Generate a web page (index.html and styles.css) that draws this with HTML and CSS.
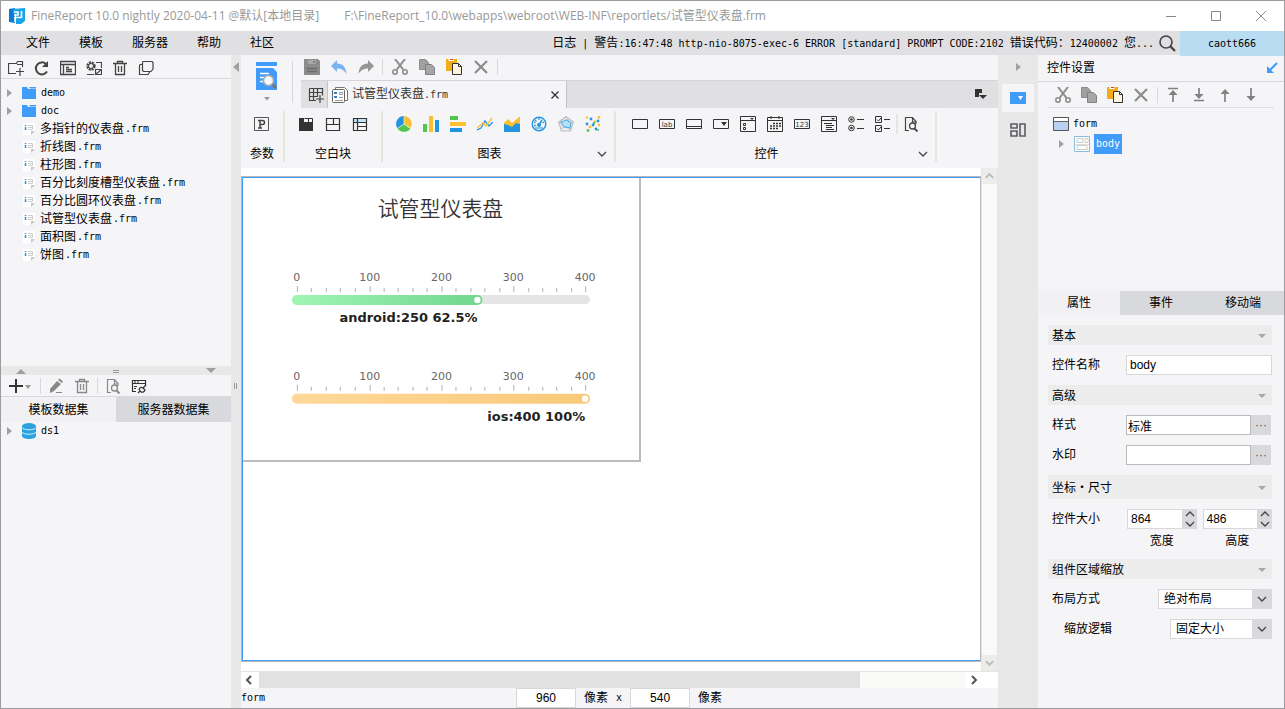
FILE: index.html
```html
<!DOCTYPE html>
<html lang="zh-CN">
<head>
<meta charset="UTF-8" />
<title>FineReport 10.0</title>
<link rel="stylesheet" href="styles.css">
</head>
<body>
<svg class="defs" width="0" height="0">
	<symbol id="cut" viewBox="0 0 16 16"><g fill="none" stroke="#8c8c8c" stroke-width="2"><path d="M3 0L11.5 11M13 0L4.5 11"/><circle cx="3" cy="13" r="2.2" stroke-width="1.6"/><circle cx="13" cy="13" r="2.2" stroke-width="1.6"/></g></symbol>
	<symbol id="copy" viewBox="0 0 16 16"><path d="M.5.5h6l3 3v7h-9z" fill="#a0a0a0" stroke="#8c8c8c"/><path d="M6.500 5.500h6l3 3v7h-9z" fill="#a6a6a6" stroke="#808080"/></symbol>
	<symbol id="paste" viewBox="0 0 16 16"><path d="M0 0h11v12H0z" fill="#f2ac16"/><path d="M2.500 0h5v2h-5z" fill="#fff"/><path d="M4 .5h3" stroke="#c8402a"/><path d="M6.500 4.500h6l3 3v8h-9z" fill="#fff5de" stroke="#333"/><path d="M12.500 4.500v3h3" fill="none" stroke="#333"/></symbol>
	<symbol id="del" viewBox="0 0 16 16"><path d="M2 2l12 12M14 2L2 14" stroke="#8c8c8c" stroke-width="2.200"/></symbol>
	<symbol id="down" viewBox="0 0 16 16"><path d="M4 6l4 4 4-4" fill="none" stroke="#444" stroke-width="1.300"/></symbol>
	<symbol id="up" viewBox="0 0 16 16"><path d="M4 10l4-4 4 4" fill="none" stroke="#444" stroke-width="1.300"/></symbol>
	<symbol id="fold" viewBox="0 0 16 16"><path d="M4 7h8l-4 4z" fill="#a6a6a6"/></symbol>
	<symbol id="right" viewBox="0 0 16 16"><path d="M6 4l5 4-5 4z" fill="#a0a0a0"/></symbol>
	<symbol id="folder" viewBox="0 0 16 16"><path d="M1 2h5l1 2h8v10H1z" fill="#419bf9"/><path d="M8 2h7v1.500H9z" fill="#419bf9"/></symbol>
	<symbol id="frm" viewBox="0 0 16 16"><path d="M2 2h12v8l-4 4H2z" fill="#fff"/><path d="M10 10h4l-4 4z" fill="#c8c8c8"/><path d="M7 4.500h4.500v4H7M7 6.500h4" fill="none" stroke="#ccc"/><path d="M4.500 4v1M4.500 6v3" stroke="#2a8fdd" stroke-width="1.500"/></symbol>
	<symbol id="trash" viewBox="0 0 16 16"><path d="M1 3.500h14M5.500 3V1.500h5V3M3.500 4v10.500h9V4M6.500 6v6M9.500 6v6" fill="none" stroke="currentColor" stroke-width="1.300"/></symbol>
	<symbol id="db" viewBox="0 0 16 16"><path d="M1 3v10c0 4 14 4 14 0V3z" fill="#2ba3df"/><ellipse cx="8" cy="3" rx="7" ry="3" fill="#2ba3df"/><path d="M1 4.500c1 3 13 3 14 0M1 9c1 3 13 3 14 0" fill="none" stroke="#d6effa"/></symbol>
</svg>

<header class="titlebar">
	<svg class="logo" viewBox="0 0 16 16"><path d="M0 1l6-1v15l-6-1z" fill="#0a7ad4"/><path d="M4 1l12-1v13l-4 3H7V6H4z" fill="#18a4e6"/><path d="M5 4h4v3H5M5 9.500h7M6 9v5M12.500 3v7" fill="none" stroke="#fff" stroke-width="1.600"/></svg>
	<span class="app">FineReport 10.0 nightly 2020-04-11 @默认[本地目录]</span>
	<span class="path">F:\FineReport_10.0\webapps\webroot\WEB-INF\reportlets/试管型仪表盘.frm</span>
	<span class="grow"></span>
	<button class="win" aria-label="最小化"><svg viewBox="0 0 12 12"><path d="M1 6.500h10" stroke="#888"/></svg></button>
	<button class="win" aria-label="最大化"><svg viewBox="0 0 12 12"><path d="M1.500 1.500h9v9h-9z" fill="none" stroke="#888"/></svg></button>
	<button class="win" aria-label="关闭"><svg viewBox="0 0 12 12"><path d="M1 1l10 10M11 1L1 11" stroke="#888"/></svg></button>
</header>

<nav class="menubar">
	<a href="#">文件</a><a href="#">模板</a><a href="#">服务器</a><a href="#">帮助</a><a href="#">社区</a>
	<span class="grow"></span>
	<span class="log">日志<tt> | </tt>警告<tt>:16:47:48 http-nio-8075-exec-6 ERROR [standard] PROMPT CODE:2102 </tt>错误代码：<tt>12400002 </tt>您<tt>...</tt></span>
	<button class="find" aria-label="搜索"><svg viewBox="0 0 18 18"><circle cx="8" cy="8" r="6" fill="none" stroke="#444" stroke-width="1.600"/><path d="M12.500 12.500L17 17" stroke="#444" stroke-width="2.400"/></svg></button>
	<a class="user" href="#"><tt>caott666</tt></a>
</nav>

<main>
	<aside class="left">
		<div class="bar files">
			<button aria-label="新建文件夹"><svg viewBox="0 0 16 16"><path d="M8 13.500H.5v-10h8l1-2h5V7M9 4.500h5M8 11.500h8M12 8v8" fill="none" stroke="#444" stroke-width="1.200"/></svg></button>
			<button aria-label="刷新"><svg viewBox="0 0 16 16"><path d="M13 11.500A6 6 0 1 1 12 4" fill="none" stroke="#444" stroke-width="2"/><path d="M14 1v6H8z" fill="#444"/></svg></button>
			<button aria-label="打开位置"><svg viewBox="0 0 16 16"><path d="M.5 1.500h15v13H.5zM1 4.500h15M3.500 5v9M6 7.500h3M6 9.500h6M6 11.500h6" fill="none" stroke="#444" stroke-width="1.300"/></svg></button>
			<button aria-label="重命名"><svg viewBox="0 0 16 16"><circle cx="5" cy="6" r="3.500" fill="none" stroke="#444" stroke-width="2.400" stroke-dasharray="2 .8"/><circle cx="5" cy="6" r="2.500" fill="none" stroke="#444"/><path d="M10 2.500h5.500V8M1 14.500h7M9.500 9.500h6v5h-6zM10 14l5-4" fill="none" stroke="#444" stroke-width="1.200"/></svg></button>
			<button aria-label="删除"><svg><use href="#trash"/></svg></button>
			<button aria-label="复制"><svg viewBox="0 0 16 16"><path d="M5 1.500h9l1 1V9l-2 2.500H5.500l-1-1V2.500z" fill="none" stroke="#444" stroke-width="1.200"/><path d="M4 4.500H2L1.500 6v8.500H10l2-3" fill="none" stroke="#444" stroke-width="1.200"/></svg></button>
		</div>
		<ul class="tree">
			<li><svg><use href="#right"/></svg><svg><use href="#folder"/></svg><tt>demo</tt></li>
			<li><svg><use href="#right"/></svg><svg><use href="#folder"/></svg><tt>doc</tt></li>
			<li class="leaf"><svg><use href="#frm"/></svg>多指针的仪表盘<tt>.frm</tt></li>
			<li class="leaf"><svg><use href="#frm"/></svg>折线图<tt>.frm</tt></li>
			<li class="leaf"><svg><use href="#frm"/></svg>柱形图<tt>.frm</tt></li>
			<li class="leaf"><svg><use href="#frm"/></svg>百分比刻度槽型仪表盘<tt>.frm</tt></li>
			<li class="leaf"><svg><use href="#frm"/></svg>百分比圆环仪表盘<tt>.frm</tt></li>
			<li class="leaf"><svg><use href="#frm"/></svg>试管型仪表盘<tt>.frm</tt></li>
			<li class="leaf"><svg><use href="#frm"/></svg>面积图<tt>.frm</tt></li>
			<li class="leaf"><svg><use href="#frm"/></svg>饼图<tt>.frm</tt></li>
		</ul>
		<div class="splitter">
			<svg viewBox="0 0 10 8"><path d="M0 7l5-5 5 5z" fill="#a0a0a0"/></svg>
			<svg viewBox="0 0 10 8"><path d="M2 3.500h6M2 5.500h6" stroke="#999"/></svg>
			<svg viewBox="0 0 10 8"><path d="M0 1h10L5 6z" fill="#a0a0a0"/></svg>
		</div>
		<div class="bar data">
			<button class="add" aria-label="新增"><svg viewBox="0 0 24 16"><path d="M1 8h14M8 1v14" stroke="#333" stroke-width="2"/><path d="M17 7h6l-3 4z" fill="#999"/></svg></button>
			<i class="sep"></i>
			<button aria-label="编辑"><svg viewBox="0 0 16 16"><path d="M2 11l7-8 4 3-7 7-4 2z" fill="#888"/><path d="M10 2l1.500-1.500L15 3.500 14 5z" fill="#888"/><path d="M8 14.500h6" stroke="#888"/></svg></button>
			<button class="dim" aria-label="删除"><svg><use href="#trash"/></svg></button>
			<i class="sep"></i>
			<button aria-label="预览"><svg viewBox="0 0 16 16"><path d="M6 14.500H2.500v-13h7l3.500 4V8M9.500 2v4H13" fill="none" stroke="#888" stroke-width="1.200"/><circle cx="9.500" cy="10" r="3" fill="none" stroke="#888" stroke-width="1.300"/><path d="M11.500 12.500l3 3" stroke="#888" stroke-width="2"/></svg></button>
			<button aria-label="连接"><svg viewBox="0 0 16 16"><path d="M5 13.500H1.500v-11h13V7M1 5.500h14M3 8.500h3M3 10.500h2M3 4h2M6 4h2" fill="none" stroke="#333" stroke-width="1.200"/><path d="M7 15l2-2M12 10l3-3" stroke="#333" stroke-width="1.300"/><path d="M8 11a3 3 0 0 1 4-1l2 2a3 3 0 0 1-4 2z" fill="none" stroke="#333" stroke-width="1.200"/></svg></button>
		</div>
		<div class="tabs">
			<button class="on">模板数据集</button><button>服务器数据集</button>
		</div>
		<ul class="tree ds">
			<li><svg><use href="#right"/></svg><svg><use href="#db"/></svg><tt>ds1</tt></li>
		</ul>
	</aside>

	<div class="handle">
		<svg viewBox="0 0 10 24"><path d="M8 7v10L2 12z" fill="#a0a0a0"/></svg>
		<svg viewBox="0 0 10 8"><path d="M3.500 1v6M5.500 1v6" stroke="#999"/></svg>
	</div>

	<section class="center">
		<div class="top">
			<button class="preview" aria-label="表单预览"><svg viewBox="0 0 22 40"><path d="M0 0h21v4H0zM0 6h17l4 4v18H0z" fill="#419bf9"/><path d="M4 11.500h9M4 15.500h5M4 19.500h5" stroke="#fff" stroke-width="1.600"/><path d="M15 21l5 5" stroke="#777" stroke-width="3"/><circle cx="12.500" cy="18.500" r="5" fill="#f3f9ff" stroke="#aaa" stroke-width="1.500"/><path d="M8 35h6l-3 3.500z" fill="#999"/></svg></button>
			<i class="sep tall"></i>
			<div class="toprows">
				<div class="bar edit">
					<button aria-label="保存"><svg viewBox="0 0 16 16"><path d="M0 0h14l2 2v14H0z" fill="#8c8c8c"/><path d="M4 1h8v4H4z" fill="#a8a8a8"/><path d="M10 2v2M3 9.500h10M3 12.500h10" stroke="#6c6c6c" stroke-width="1.300"/></svg></button>
					<button aria-label="撤销"><svg viewBox="0 0 16 16"><path d="M6 1v3.500c6 0 9 4 9.500 10.500C13 11 10 9.500 6 9.500V13L0 7z" fill="#7db3ef"/></svg></button>
					<button aria-label="重做"><svg viewBox="0 0 16 16"><path d="M10 1v3.500C4 4.500 1 8.500.5 15 3 11 6 9.500 10 9.500V13l6-6z" fill="#969696"/></svg></button>
					<i class="sep"></i>
					<button aria-label="剪切"><svg><use href="#cut"/></svg></button>
					<button aria-label="复制"><svg><use href="#copy"/></svg></button>
					<button aria-label="粘贴"><svg><use href="#paste"/></svg></button>
					<button aria-label="删除"><svg><use href="#del"/></svg></button>
					<i class="sep"></i>
				</div>
				<div class="filetabs">
					<button class="new" aria-label="新建"><svg viewBox="0 0 16 16"><path d="M1.500 1.500h13v7M8 13.500H1.500v-12M1 5.500h14M1 9.500h8M5.500 2v11M9.500 2v8M8 12h8M12 8v8" fill="none" stroke="#444" stroke-width="1.200"/></svg></button>
					<div class="filetab">
						<svg viewBox="0 0 16 16"><path d="M3.500 3V.5h9l3 3v10H13" fill="#fff" stroke="#777"/><rect x=".5" y="2.500" width="12" height="13" rx="1" fill="#fff" stroke="#666"/><path d="M2 5h3v2H2zM2 9h3v2H2z" fill="#2a7fd0"/><path d="M7.500 5.500h3v2h-3zM7 10.500h4M3 13.500h8" fill="none" stroke="#999"/></svg>
						<span>试管型仪表盘<tt>.frm</tt></span>
						<button aria-label="关闭"><svg viewBox="0 0 10 10"><path d="M1.500 1.500l7 7M8.500 1.500l-7 7" stroke="#333" stroke-width="1.300"/></svg></button>
					</div>
					<span class="grow"></span>
					<button class="list" aria-label="标签列表"><svg viewBox="0 0 12 12"><path d="M0 0h7v4H4v4H0z" fill="#333"/><path d="M4 6h8l-4 4z" fill="#333"/></svg></button>
				</div>
			</div>
		</div>
		<div class="ribbon">
			<div class="group g1">
				<div class="icons"><svg viewBox="0 0 16 16"><path d="M.5 1.500h14v13H.5z" fill="none" stroke="#555"/><path d="M4 4.500h4.500a2 2 0 0 1 0 4H6M6 4v8M4 12h4" fill="none" stroke="#444" stroke-width="1.500"/></svg></div>
				<p>参数</p>
			</div>
			<div class="group g2">
				<div class="icons">
					<svg viewBox="0 0 16 16"><path d="M1 2h5v4h9v9H1z" fill="#333"/><path d="M6.500 2.500h8v4M10.500 2v4" fill="none" stroke="#333"/></svg>
					<svg viewBox="0 0 16 16"><path d="M1.500 2.500h13v12h-13zM1 8.500h14M8.500 2v6" fill="none" stroke="#333" stroke-width="1.200"/></svg>
					<svg viewBox="0 0 16 16"><path d="M1.500 2.500h13v4h-13z" fill="#bfe3f8"/><path d="M1.500 2.500h13v12h-13zM1 6.500h14M5.500 2v12M5 10.500h10" fill="none" stroke="#333" stroke-width="1.200"/></svg>
				</div>
				<p>空白块</p>
			</div>
			<div class="group g3">
				<div class="icons">
					<svg viewBox="0 0 16 16"><path d="M8 8V0a8 8 0 0 0-6.500 12.500z" fill="#2394e0"/><path d="M8 8V0a8 8 0 0 1 6.500 12z" fill="#fbc02f"/><path d="M8 8l6.500 4.500a8 8 0 0 1-13 0z" fill="#50c651"/><path d="M8 0v8l6.500 4.500M8 8l-6.500 4.500" fill="none" stroke="#fff" stroke-width=".6"/></svg>
					<svg viewBox="0 0 16 16"><path d="M0 8h4v8H0z" fill="#50c651"/><path d="M6 0h4v16H6z" fill="#fbc02f"/><path d="M12 4h4v12h-4z" fill="#2394e0"/></svg>
					<svg viewBox="0 0 16 16"><path d="M0 0h8v4H0z" fill="#50c651"/><path d="M0 6h16v4H0z" fill="#fbc02f"/><path d="M0 12h12v4H0z" fill="#2394e0"/></svg>
					<svg viewBox="0 0 16 16"><path d="M0 14l4-2 4-7 4 5 4-4" fill="none" stroke="#2394e0" stroke-width="1.300"/><path d="M0 12l6-5 3 3 6-8" fill="none" stroke="#fbc02f" stroke-width="1.300"/></svg>
					<svg viewBox="0 0 16 16"><path d="M0 7l4-4 4 4 7-6h1v15H0z" fill="#fbc02f"/><path d="M0 8l4 1 4 2 4-4 4 1v8H0z" fill="#2394e0"/></svg>
					<svg viewBox="0 0 16 16"><circle cx="8" cy="8" r="6.800" fill="none" stroke="#2394e0" stroke-width="1.400"/><path d="M8 2v2M3 6l1.500 1M13 6l-1.500 1M4 12h8M3 10l2-1M4 4l1.500 1.500" stroke="#2394e0" stroke-width="1.200"/><circle cx="8" cy="9" r="2" fill="#2394e0"/><path d="M8 9l3-5" stroke="#2394e0" stroke-width="1.500"/></svg>
					<svg viewBox="0 0 16 16"><path d="M8 .8L15.300 6l-2.800 9h-9L.7 6z" fill="#eee" stroke="#bbb" stroke-width="1.200"/><path d="M8 3v3L4 13M1 6l7 4 7-4M8 8l4 6" fill="none" stroke="#ccc"/><path d="M3 6l6-2 4 3-1 5-6-1z" fill="#b9e1f8" stroke="#57b5ea" stroke-width="1.300"/></svg>
					<svg viewBox="0 0 16 16"><g fill="#2394e0"><circle cx="6" cy="3" r="1.400"/><circle cx="13" cy="5" r="1.400"/><circle cx="2" cy="8" r="1.400"/><circle cx="8" cy="9" r="1.400"/><circle cx="11" cy="13" r="1.400"/></g><g fill="#fbc02f"><circle cx="2" cy="1.500" r="1.200"/><circle cx="14" cy="1.500" r="1.400"/><circle cx="5" cy="11" r="1.400"/><circle cx="10" cy="5.500" r="1.200"/><circle cx="14" cy="9" r="1.200"/></g><g fill="#50c651"><circle cx="9" cy="7" r="1.200"/><circle cx="3" cy="14.500" r="1.400"/><circle cx="13" cy="14" r="1"/></g></svg>
				</div>
				<p>图表<svg><use href="#down"/></svg></p>
			</div>
			<div class="group g4">
				<div class="icons">
					<svg viewBox="0 0 16 16"><path d="M.5 3.500h15v9H.5z" fill="none" stroke="#333"/></svg>
					<svg viewBox="0 0 16 16"><path d="M.5 3.500h15v9H.5z" fill="none" stroke="#333"/><text x="8" y="11">lab</text></svg>
					<svg viewBox="0 0 16 16"><path d="M.5 3.500h15v9H.5zM1 10.500h14" fill="none" stroke="#333"/></svg>
					<svg viewBox="0 0 16 16"><path d="M.5 3.500h15v9H.5z" fill="none" stroke="#333"/><path d="M8 6h6l-3 4z" fill="#333"/></svg>
					<svg viewBox="0 0 16 16"><path d="M.5.5h15v15H.5zM.5 4.500h15M3.500 7.500h2v2h-2zM3.500 11.500h2v2h-2z" fill="none" stroke="#333"/><path d="M10 2h4l-2 2z" fill="#333"/></svg>
					<svg viewBox="0 0 16 16"><path d="M.5 1.500h15v14H.5zM1 4.500h14M4 0v3M12 0v3" fill="none" stroke="#333"/><path d="M6 7.500h8M3 10h11M3 12.500h8" stroke="#333" stroke-width="1.500" stroke-dasharray="2 1"/></svg>
					<svg viewBox="0 0 16 16"><path d="M.5 3.500h15v9H.5z" fill="none" stroke="#333"/><text x="8" y="11">123</text></svg>
					<svg viewBox="0 0 16 16"><path d="M.5.5h15v15H.5zM.5 4.500h15M3 7.500h8M5 9.500h8M5 11.500h6M5 13.500h8" fill="none" stroke="#333"/><path d="M10 2h4l-2 2z" fill="#333"/></svg>
					<svg viewBox="0 0 16 16"><g fill="none" stroke="#333"><circle cx="3.500" cy="3.500" r="2.800"/><circle cx="3.500" cy="12" r="2.800"/><path d="M9 3.500h7M9 12.500h7"/></g><circle cx="3.500" cy="3.500" r="1.300" fill="#333"/><circle cx="3.500" cy="12" r="1.300" fill="#333"/></svg>
					<svg viewBox="0 0 16 16"><path d="M.5.5h6v6h-6zM.5 9.500h6v6h-6zM9 3.500h6M9 12.500h6M2 3.500l1.500 1.500L6 2M2 12.500L3.500 14 6 11" fill="none" stroke="#333"/></svg>
					<i class="sep"></i>
					<svg viewBox="0 0 16 16"><path d="M6 14.500H2.500v-13h7l3.500 4V8M9.500 2v4H13" fill="none" stroke="#444" stroke-width="1.200"/><circle cx="9.500" cy="10" r="3" fill="none" stroke="#444" stroke-width="1.300"/><path d="M11.500 12.500l3 3" stroke="#444" stroke-width="1.800"/></svg>
				</div>
				<p>控件<svg><use href="#down"/></svg></p>
			</div>
		</div>

		<div class="work">
			<div class="canvas">
				<div class="sheet">
					<div class="form">
						<svg class="chart" viewBox="0 0 397 282">
							<defs>
								<linearGradient id="green"><stop offset="0" stop-color="#a0f5b5"/><stop offset="1" stop-color="#70d68e"/></linearGradient>
								<linearGradient id="orange"><stop offset="0" stop-color="#ffd899"/><stop offset="1" stop-color="#f8c979"/></linearGradient>
								<g id="scale">
									<path d="M54.500 108v6M127.500 108v6M199.500 108v6M271.500 108v6M343.500 108v6" stroke="#b0b0b0"/>
									<path d="M68.500 110v4M83.500 110v4M97.500 110v4M112.500 110v4M141.500 110v4M155.500 110v4M170.500 110v4M184.500 110v4M213.500 110v4M228.500 110v4M242.500 110v4M257.500 110v4M286.500 110v4M300.500 110v4M314.500 110v4M329.500 110v4" stroke="#b0b0b0"/>
								</g>
							</defs>
							<text class="title" x="198" y="38">试管型仪表盘</text>
							<g class="num"><text x="54" y="103">0</text><text x="127" y="103">100</text><text x="199" y="103">200</text><text x="271" y="103">300</text><text x="343" y="103">400</text></g>
							<use href="#scale"/>
							<rect x="50" y="117" width="298" height="9" rx="4.500" fill="#e5e5e5"/>
							<rect x="49" y="117" width="191" height="10" rx="5" fill="url(#green)"/>
							<circle cx="235" cy="122" r="3.200" fill="#fff"/>
							<text class="val" x="235" y="144">android:250 62.5%</text>
							<g class="num"><text x="54" y="202">0</text><text x="127" y="202">100</text><text x="199" y="202">200</text><text x="271" y="202">300</text><text x="343" y="202">400</text></g>
							<use href="#scale" y="99"/>
							<rect x="49" y="216" width="299" height="10" rx="5" fill="url(#orange)"/>
							<circle cx="343" cy="221" r="3.200" fill="#fff"/>
							<text class="val" x="343" y="243">ios:400 100%</text>
						</svg>
					</div>
				</div>
			</div>
			<div class="vscroll">
				<svg viewBox="0 0 16 16"><path d="M4 10l4-4 4 4" fill="none" stroke="#bbb" stroke-width="2"/></svg>
				<svg viewBox="0 0 16 16"><path d="M4 6l4 4 4-4" fill="none" stroke="#bbb" stroke-width="2"/></svg>
			</div>
		</div>
		<div class="hscroll">
			<svg viewBox="0 0 16 16"><path d="M9 4L5 8l4 4" fill="none" stroke="#555" stroke-width="2"/></svg>
			<div class="track"><div class="thumb"></div></div>
			<svg viewBox="0 0 16 16"><path d="M5 4l4 4-4 4" fill="none" stroke="#555" stroke-width="2"/></svg>
			<span class="end"></span>
		</div>
		<div class="status">
			<tt class="node">form</tt>
			<input aria-label="宽" value="960"><span>像素</span><tt>x</tt><input aria-label="高" value="540"><span>像素</span>
		</div>
	</section>

	<div class="strip">
		<button aria-label="收起"><svg><use href="#right"/></svg></button>
		<button class="on" aria-label="控件设置"><svg viewBox="0 0 16 16"><path d="M0 2h16v12H0z" fill="#419bf9"/><path d="M8 6h5l-2.500 4z" fill="#fff"/></svg></button>
		<button aria-label="控件库"><svg viewBox="0 0 16 16"><path d="M1 2h6v4H1zM1 9h6v5H1zM10 2h5v12h-5z" fill="none" stroke="#5a5c62" stroke-width="1.600"/></svg></button>
	</div>

	<aside class="right">
		<h2>控件设置<svg viewBox="0 0 12 12"><path d="M1 4v7h7z" fill="#419bf9"/><path d="M3 9l8-8" stroke="#419bf9" stroke-width="2"/></svg></h2>
		<div class="bar widget">
			<button aria-label="剪切"><svg><use href="#cut"/></svg></button>
			<button aria-label="复制"><svg><use href="#copy"/></svg></button>
			<button aria-label="粘贴"><svg><use href="#paste"/></svg></button>
			<button aria-label="删除"><svg><use href="#del"/></svg></button>
			<i class="sep"></i>
			<button aria-label="置顶"><svg viewBox="0 0 16 16"><path d="M3 1.500h10M8 5v10" stroke="#808080" stroke-width="1.700"/><path d="M3.500 8L8 3l4.500 5z" fill="#808080"/></svg></button>
			<button aria-label="置底"><svg viewBox="0 0 16 16"><path d="M3 13.500h10M8 1v9" stroke="#808080" stroke-width="1.700"/><path d="M3.500 7L8 12l4.500-5z" fill="#808080"/></svg></button>
			<button aria-label="上移"><svg viewBox="0 0 16 16"><path d="M8 4v11" stroke="#808080" stroke-width="1.700"/><path d="M3.500 7L8 2l4.500 5z" fill="#808080"/></svg></button>
			<button aria-label="下移"><svg viewBox="0 0 16 16"><path d="M8 1v11" stroke="#808080" stroke-width="1.700"/><path d="M3.500 9L8 14l4.500-5z" fill="#808080"/></svg></button>
		</div>
		<ul class="wtree">
			<li><svg viewBox="0 0 16 16"><path d="M.5 1.500h15v13H.5z" fill="#bcd0f2" stroke="#555"/><path d="M1 2h14v3H1z" fill="#fff"/><path d="M1 5.500h14" stroke="#666"/></svg><tt>form</tt></li>
			<li class="sub"><svg><use href="#right"/></svg><svg viewBox="0 0 16 16"><path d="M.5.5h15v15H.5z" fill="#fff" stroke="#8bbcdc"/><path d="M3 2.500h6v4H3zM11 2.500h3v4h-3zM3 9.500h10v4H3z" fill="none" stroke="#ccc"/><path d="M1 8.500h14" stroke="#ddd"/></svg><tt class="sel">body</tt></li>
		</ul>
		<div class="tabs three">
			<button class="on">属性</button><button>事件</button><button>移动端</button>
		</div>
		<div class="props">
			<h3>基本<svg><use href="#fold"/></svg></h3>
			<div class="row"><label for="wname">控件名称</label><input id="wname" value="body"></div>
			<h3>高级<svg><use href="#fold"/></svg></h3>
			<div class="row more"><label for="wstyle">样式</label><input id="wstyle" value="标准"><button aria-label="选择样式">···</button></div>
			<div class="row more"><label for="wmark">水印</label><input id="wmark"><button aria-label="选择水印">···</button></div>
			<h3 class="big">坐标·尺寸<svg><use href="#fold"/></svg></h3>
			<div class="row size"><span class="name">控件大小</span>
				<div class="spin"><input id="ww" value="864"><span><button aria-label="增加"><svg><use href="#up"/></svg></button><button aria-label="减少"><svg><use href="#down"/></svg></button></span><label for="ww">宽度</label></div>
				<div class="spin"><input id="wh" value="486"><span><button aria-label="增加"><svg><use href="#up"/></svg></button><button aria-label="减少"><svg><use href="#down"/></svg></button></span><label for="wh">高度</label></div>
			</div>
			<h3>组件区域缩放<svg><use href="#fold"/></svg></h3>
			<div class="row"><label for="layout">布局方式</label><div class="pick"><select id="layout"><option>绝对布局</option></select><svg><use href="#down"/></svg></div></div>
			<div class="row indent"><label for="scaling">缩放逻辑</label><div class="pick"><select id="scaling"><option>固定大小</option></select><svg><use href="#down"/></svg></div></div>
		</div>
	</aside>
</main>
</body>
</html>
```

FILE: styles.css
```css
*{box-sizing:border-box;}
html,body{height:100%;}
body{margin:0;border:1px solid #9c9c9f;background:#f5f5f7;display:flex;flex-direction:column;overflow:hidden;}
body,button,select,input{font-family:"Liberation Sans","Noto Sans CJK SC",sans-serif;font-size:12px;line-height:18px;color:#000;}
button{border:0;padding:0;background:none;display:flex;align-items:center;justify-content:center;}
a{color:#000;text-decoration:none;}
svg{width:16px;height:16px;display:block;flex:none;}
.defs{position:absolute;width:0;height:0;}
tt{font-family:"DejaVu Sans Mono",monospace;font-size:10px;white-space:pre;}
ul{list-style:none;margin:0;padding:0;}
h2,h3,p{margin:0;font-size:12px;font-weight:normal;}
.grow{flex:1;}

/* title and menu */
.titlebar{flex:none;height:30px;background:#fff;display:flex;align-items:center;padding-left:8px;color:#999;font-family:"Open Sans","Noto Sans CJK SC",sans-serif;white-space:nowrap;}
.logo{margin-right:6px;}
.path{margin-left:25px;}
.win{width:45px;height:30px;}
.win svg{width:12px;height:12px;}
.win:last-child{margin-right:1px;}
.menubar{flex:none;height:24px;background:#e0e0e2;display:flex;align-items:center;padding-left:25px;white-space:nowrap;}
.menubar a{margin-right:29px;}
.find{width:26px;height:24px;}
.find svg{width:18px;height:18px;}
.menubar .user{width:104px;margin:0;line-height:24px;text-align:center;background:#b8dcf2;}

main{flex:1;min-height:0;display:flex;}
.bar{display:flex;align-items:center;flex:none;}
.sep{flex:none;width:1px;height:16px;background:#d8d8da;}

/* left panel */
.left{width:230px;flex:none;display:flex;flex-direction:column;}
.files{height:24px;padding:2px 0 0 2px;border-bottom:1px solid #d8d8da;}
.files button{width:26px;color:#444;}
.tree{flex:none;height:287px;padding-top:5px;}
.tree li{height:18px;display:flex;align-items:center;white-space:nowrap;}
.tree li svg + svg{margin:0 4px;}
.tree .leaf{padding-left:20px;}
.tree .leaf svg{margin-right:3px;}
.tree .leaf tt{padding-left:1px;}
.splitter{flex:none;height:9px;background:#e8e8e8;display:flex;justify-content:space-between;align-items:center;padding:0 15px;}
.splitter svg{width:10px;height:8px;}
.data{height:22px;padding-left:7px;border-bottom:1px solid #d8d8da;}
.data button{width:26px;}
.data .add{width:32px;justify-content:flex-start;}
.data .add svg{width:24px;}
.data .sep + button{margin-left:2px;}
.data .dim{color:#888;margin-right:2px;}
.tabs{flex:none;display:flex;height:25px;}
.tabs button{flex:1;background:#d8d9dc;}
.tabs .on{background:#f1f1f3;}
.ds{flex:1;padding-top:0;}

.handle{width:10px;flex:none;background:#e8e8e8;position:relative;}
.handle svg{width:10px;height:24px;}
.handle svg + svg{position:absolute;top:50%;height:8px;}

/* center */
.center{flex:1;min-width:0;display:flex;flex-direction:column;}
.top{flex:none;height:53px;display:flex;}
.preview{width:51px;align-items:flex-start;padding-top:7px;}
.preview svg{width:22px;height:40px;}
.tall{height:42px;margin:6px 8px 0 0;}
.toprows{flex:1;}
.edit{height:25px;padding:0 0 1px 0;}
.edit button{width:27px;}
.edit button:first-child{width:22px;margin-right:2px;}
.edit .sep{margin:0 3px;}
.filetabs{height:28px;background:#e0e0e2;border-top:1px solid #d4d4d6;display:flex;}
.new{width:27px;padding-left:4px;border-right:1px solid #c4c4c6;}
.filetab{width:239px;background:#f5f5f7;border-right:1px solid #c4c4c6;display:flex;align-items:center;padding:0 6px 0 4px;color:#333;}
.filetab span{flex:1;padding-left:4px;}
.filetab button svg{width:10px;height:10px;}
.list{width:35px;}
.list svg{width:12px;height:12px;}
.ribbon{flex:none;height:60px;display:flex;padding:3px 0 6px;}
.group{border-right:2px solid #e6e6dd;display:flex;flex-direction:column;justify-content:space-between;}
.g1{width:44px;}
.g2{width:98px;}
.g3{width:233px;}
.g4{width:321px;}
.icons{display:flex;justify-content:center;align-items:center;gap:11px;padding-top:5px;}
.icons text{font-family:"DejaVu Sans",sans-serif;font-size:7px;fill:#333;text-anchor:middle;}
.icons .sep{width:2px;height:20px;margin:-2px -6px;background:#e6e6dd;}
.group p{text-align:center;line-height:16px;position:relative;}
.g3 p,.g4 p{padding-right:18px;}
.group p svg{position:absolute;right:4px;top:0;}

.work{flex:1;min-height:0;display:flex;background:#fff;}
.canvas{flex:1;display:flex;margin:8px 0 9px;border:1px solid #b8b8b8;}
.sheet{flex:1;border:1px solid #419bf9;border-right:0;}
.form{width:398px;border:solid #bbb;border-width:0 2px 2px 0;}
.chart{width:396px;height:282px;}
.chart text{font-family:"DejaVu Sans",sans-serif;}
.chart .title{font-family:"Noto Sans CJK SC",sans-serif;font-size:21px;font-weight:350;fill:#333;text-anchor:middle;}
.chart .num{font-size:11px;fill:#666;text-anchor:middle;}
.chart .val{font-size:13px;font-weight:bold;fill:#222;text-anchor:end;}
.vscroll{width:17px;flex:none;background:#f9f9f7;border:solid #e6e6dd;border-width:0 1px;display:flex;flex-direction:column;justify-content:space-between;}
.vscroll svg{width:15px;height:16px;background:#ececea;}
.hscroll{flex:none;height:17px;display:flex;background:#fff;border-top:1px solid #e6e6dd;}
.hscroll svg{margin:0 1px;}
.track{flex:1;background:#f9f9f7;}
.thumb{width:85%;height:16px;background:#e1e1e1;}
.end{width:14px;}
.status{flex:none;height:20px;display:flex;align-items:center;white-space:nowrap;}
.node{width:275px;}
.status input{width:60px;height:20px;border:1px solid #d8d8da;text-align:center;padding:0;}
.status span{margin:0 8px;}
.status .node{margin:0;}
.status tt{margin-right:8px;}

/* right panel */
.strip{width:40px;flex:none;background:#e8e8e8;display:flex;flex-direction:column;align-items:center;}
.strip button{width:32px;height:28px;}
.strip button:first-child{height:24px;margin-bottom:5px;}
.strip .on{background:#f5f5f7;margin-bottom:4px;}
.right{width:246px;flex:none;display:flex;flex-direction:column;}
.right h2{flex:none;height:27px;line-height:26px;border-bottom:1px solid #d8d8da;padding:0 6px 0 9px;display:flex;justify-content:space-between;align-items:center;}
.right h2 svg{width:12px;height:12px;}
.widget{height:26px;margin:0 10px;padding-left:2px;border-bottom:1px solid #e0e0e2;}
.widget button{width:26px;}
.widget .sep{margin:0 2px 0 3px;}
.wtree{flex:none;height:183px;padding:6px 0 0 15px;}
.wtree li{height:20px;display:flex;align-items:center;}
.wtree li tt{margin-left:4px;}
.wtree .sub svg + svg{margin-left:5px;}
.wtree .sel{background:#419bf9;color:#fff;line-height:20px;padding:0 2px;}
.three{height:24px;}
.props{padding:10px 12px 0 10px;display:flex;flex-direction:column;gap:10px;}
.props h3{font-family:"Noto Sans CJK SC",sans-serif;height:20px;line-height:20px;background:#ececed;padding:0 2px 0 4px;display:flex;justify-content:space-between;align-items:center;}
.props .big{height:24px;}
.row{display:flex;padding-left:4px;line-height:20px;}
.row > label,.name{width:74px;flex:none;}
.row input{flex:1;width:0;height:20px;border:1px solid #d8d8da;padding:0 3px;}
.more input{border-color:#bbb;padding:0 1px;}
.more button{width:20px;height:20px;margin-right:1px;background:#d8d9dc;color:#555;}
.size{height:40px;gap:6px;}
.size .name{width:69px;}
.spin{flex:1;display:flex;flex-wrap:wrap;}
.spin span{width:14px;height:20px;background:#d8d9dc;}
.spin button{width:14px;height:10px;overflow:hidden;}
.spin input{flex:1;}
.spin label{width:100%;text-align:center;padding-top:4px;line-height:16px;}
.pick{flex:1;position:relative;margin-left:32px;height:20px;}
.pick select{appearance:none;width:100%;height:20px;line-height:18px;border:1px solid #d8d8da;border-right:20px solid #d8d9dc;border-radius:0;background:#fff;padding:0 5px;}
.pick svg{position:absolute;right:2px;top:2px;pointer-events:none;}
.indent{padding-left:16px;}
```
